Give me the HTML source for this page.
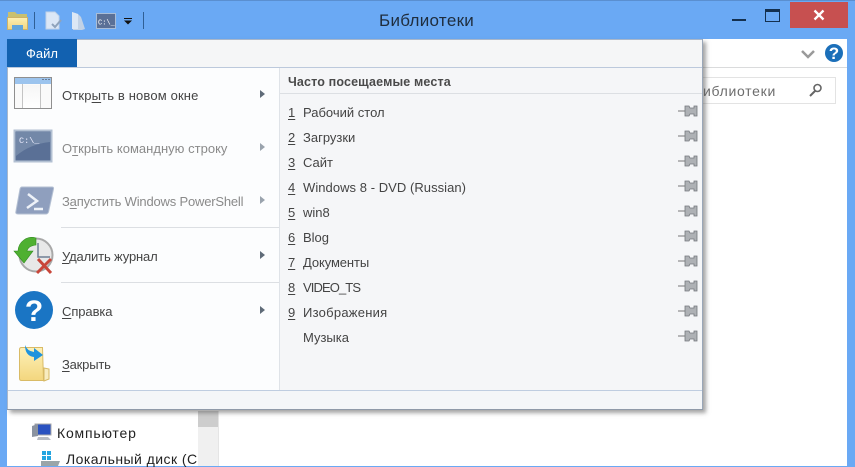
<!DOCTYPE html>
<html><head><meta charset="utf-8"><style>
html,body{margin:0;padding:0}
body{width:855px;height:466px;overflow:hidden;position:relative;background:#6aa9f4;font-family:"Liberation Sans","DejaVu Sans",sans-serif;font-size:13px;color:#444}
.a{position:absolute}
.t{position:absolute;white-space:nowrap;line-height:16px;letter-spacing:0}
.g{color:#8a8a8a}
u{text-underline-offset:2px}
.arr{position:absolute;left:260px;width:0;height:0;border-left:5px solid #5f6b78;border-top:4px solid transparent;border-bottom:4px solid transparent}
.n{left:288px}.r{left:303px}
</style></head><body>
<div class="a" style="left:0;top:0;width:855px;height:1px;background:#5a8fd0"></div>
<!-- quick access -->
<svg class="a" style="left:0;top:0" width="150" height="38">
<defs><linearGradient id="yf" x1="0" y1="0" x2="0" y2="1"><stop offset="0" stop-color="#fdf0b4"/><stop offset="1" stop-color="#f2d680"/></linearGradient></defs>
<path d="M8 12h7l2 2h10v6H8z" fill="#c8c070"/><path d="M7.500 17.500h20v12h-20z" fill="url(#yf)" stroke="#cdb268"/><path d="M12 25h11v5H12z" fill="#62a6dc"/>
<rect x="34" y="12" width="1" height="17" fill="#2f5f95"/>
<path d="M46 12h9l4 4v13H46z" fill="#dbe7f6" stroke="#c0d2e8"/><path d="M52 24l3 3 6-7" stroke="#8fa3bc" stroke-width="2" fill="none"/>
<path d="M72 12l6 2 3 3 4 12-3 1H73z" fill="#c2d2e6"/><path d="M72 12v17h6V14z" fill="#dce7f5"/>
<rect x="96.500" y="13.500" width="19" height="15" fill="#5a7096" stroke="#a9bdd6"/>
<text x="98" y="24.500" font-family="Liberation Mono" font-size="7" fill="#fff">C:\_</text>
<rect x="124" y="18" width="8" height="1" fill="#111"/><path d="M124 20.500h8l-4 4z" fill="#111"/>
<rect x="143" y="12" width="1" height="17" fill="#2f5f95"/>
</svg>
<div class="t" style="left:379px;top:10px;font-size:17px;line-height:22px;color:#1f2d3d;letter-spacing:.3px">Библиотеки</div>
<div class="a" style="left:732px;top:19px;width:14px;height:2px;background:#14304f"></div>
<div class="a" style="left:765px;top:9px;width:13px;height:9px;border:1px solid #14304f;border-top:3px solid #14304f"></div>
<div class="a" style="left:790px;top:2px;width:58px;height:26px;background:#c75050"></div>
<svg class="a" style="left:812px;top:9px" width="14" height="12"><path d="M2.500 1.500l9 9M11.500 1.500l-9 9" stroke="#fff" stroke-width="2.300"/></svg>
<!-- window -->
<div class="a" style="left:7px;top:39px;width:840px;height:427px;background:#fff"></div>
<div class="a" style="left:7px;top:67px;width:840px;height:1px;background:#dadbdc"></div>
<svg class="a" style="left:800px;top:48px" width="20" height="14"><path d="M2 3l6 6 6-6" stroke="#9a9a9a" stroke-width="2.500" fill="none"/></svg>
<div class="a" style="left:825px;top:44px;width:18px;height:18px;border-radius:50%;background:#1b6fb9;color:#fff;font:bold 17px/19px 'Liberation Sans';text-align:center">?</div>
<div class="a" style="left:640px;top:77px;width:194px;height:25px;border:1px solid #e3e3e3"></div>
<div class="t" style="left:703px;top:83px;color:#6d6d6d;font-size:14px;letter-spacing:.7px">иблиотеки</div>
<svg class="a" style="left:808px;top:82px" width="16" height="16"><circle cx="9.500" cy="6" r="3.500" fill="none" stroke="#666" stroke-width="1.600"/><path d="M7 9l-5 5" stroke="#666" stroke-width="2"/></svg>
<!-- nav -->
<div class="a" style="left:198px;top:411px;width:20px;height:55px;background:#f0f0f0"></div>
<div class="a" style="left:198px;top:411px;width:20px;height:16px;background:#cdcdcd"></div>
<div class="a" style="left:218px;top:411px;width:1px;height:55px;background:#e5e5e5"></div>
<svg class="a" style="left:30px;top:422px" width="24" height="20"><rect x="5" y="2" width="16" height="11" fill="#2a52c0" stroke="#aaa"/><path d="M8 15h10l3 3H7z" fill="#b8bcc4"/><path d="M2 4l6-2v12l-6 1z" fill="#8b93a0"/></svg>
<div class="t" style="left:57px;top:425px;font-size:14px;color:#222;letter-spacing:.8px">Компьютер</div>
<svg class="a" style="left:40px;top:450px" width="22" height="16"><rect x="2" y="1" width="4" height="4" fill="#24a5e0"/><rect x="7" y="1" width="4" height="4" fill="#24a5e0"/><rect x="2" y="6" width="4" height="4" fill="#24a5e0"/><rect x="7" y="6" width="4" height="4" fill="#24a5e0"/><path d="M1 11h19l-2 5H1z" fill="#9aa5a8"/></svg>
<div class="t" style="left:66px;top:451px;font-size:14px;color:#222;letter-spacing:.45px;width:131px;overflow:hidden">Локальный диск (С:)</div>
<!-- menu -->
<div class="a" style="left:7px;top:39px;width:696px;height:371px;background:#fcfdfe;box-shadow:3px 3px 4px rgba(90,90,90,.55)"></div>
<div class="a" style="left:7px;top:39px;width:696px;height:28px;background:#f5f6f7"></div>
<div class="a" style="left:7px;top:39px;width:696px;height:1px;background:#a9b7ca"></div>
<div class="a" style="left:7px;top:67px;width:696px;height:1px;background:#bcc9dc"></div>
<div class="a" style="left:7px;top:39px;width:1px;height:371px;background:#a9b7ca"></div>
<div class="a" style="left:702px;top:39px;width:1px;height:371px;background:#9aa7b8"></div>
<div class="a" style="left:7px;top:409px;width:696px;height:1px;background:#8f9aa8"></div>
<div class="a" style="left:7px;top:39px;width:70px;height:28px;background:#1261b0;color:#fff;font-size:13px;line-height:29px;text-align:center;letter-spacing:0">Файл</div>
<!-- right pane -->
<div class="a" style="left:280px;top:68px;width:422px;height:322px;background:#f5f6f8"></div>
<div class="a" style="left:279px;top:68px;width:1px;height:322px;background:#dfe3e8"></div>
<div class="a" style="left:280px;top:93px;width:422px;height:1px;background:#dcdfe3"></div>
<div class="a" style="left:8px;top:390px;width:694px;height:1px;background:#bfcde0"></div>
<div class="a" style="left:8px;top:391px;width:694px;height:18px;background:#f4f6f8"></div>
<div class="a" style="left:61px;top:227px;width:218px;height:1px;background:#dcdfe3"></div>
<div class="a" style="left:61px;top:282px;width:218px;height:1px;background:#dcdfe3"></div>
<div class="t" style="left:288px;top:74px;font-weight:bold;font-size:12.500px;color:#4a4a4a;letter-spacing:.15px">Часто посещаемые места</div>
<!-- left icons -->
<svg class="a" style="left:0;top:68px" width="62" height="322">
<defs><linearGradient id="yg" x1="0" y1="0" x2="0" y2="1"><stop offset="0" stop-color="#fdf1b8"/><stop offset="1" stop-color="#f3d67e"/></linearGradient>
<linearGradient id="wg" x1="0" y1="0" x2="0" y2="1"><stop offset="0" stop-color="#f6f6f6"/><stop offset="1" stop-color="#fff"/></linearGradient></defs>
<rect x="14.500" y="9.500" width="37" height="31" fill="#fafafa" stroke="#8f8f8f"/><rect x="15" y="10" width="36" height="6" fill="#9cc4ee"/>
<path d="M23 17h17v23H23z" fill="url(#wg)"/><path d="M22.500 16v24M40.500 16v24" stroke="#c4c4c4"/>
<path d="M42 11.500h8" stroke="#6a7f99" stroke-dasharray="2 1"/>
<rect x="14.500" y="62.500" width="37" height="31" fill="#5a7096" stroke="#b2c0d2" stroke-width="2"/>
<path d="M16 64h34v10Q30 76 16 88z" fill="#7388a8"/>
<text x="19" y="75" font-family="Liberation Mono" font-size="8.500" fill="#eef">C:\_</text>
<path d="M22 119h30q2 0 1.500 2l-5 23a3 3 0 0 1-3 2H18q-3 0-2-3l4-22q.5-2 2-2z" fill="#8f9fbe" stroke="#b4c0d3"/>
<path d="M28 126l9 7-10 7M34 141h9" stroke="#eef2f8" stroke-width="2.500" fill="none"/>
<circle cx="36" cy="187" r="16.500" fill="#e8e8e8" stroke="#a8a8a8" stroke-width="2"/>
<path d="M38 175v14h12" stroke="#6f7f94" stroke-width="1.500" fill="none"/>
<path d="M36 170a14 14 0 0 0-18 13h-4l10 12 9-12h-6q1-5 9-6z" fill="#4fb031" stroke="#2f8a1e" stroke-width=".6"/>
<path d="M38 191l13 14M51 191l-14 14" stroke="#c8463a" stroke-width="3"/>
<circle cx="34" cy="242" r="19" fill="#1a75c4"/>
<text x="34" y="253" text-anchor="middle" font-family="Liberation Sans" font-weight="bold" font-size="30" fill="#fff">?</text>
<path d="M21.500 279.500h21l1 33h-22q-2 0-2-2v-29q0-2 2-2z" fill="url(#yg)" stroke="#d9bb66"/>
<path d="M44 300l5 1v10l-5 2z" fill="#f8ecc0" stroke="#d6b964"/>
<path d="M25 277q2 6 9 7v-4l9 7-9 6v-4q-9-1-9-12z" fill="#1f93dd"/>
</svg>
<!-- left labels -->
<div class="t" style="left:62px;top:88px;letter-spacing:.15px">Отк<span>р<u>ы</u>ть в новом окне</span></div><div class="arr" style="top:90px"></div>
<div class="t g" style="left:62px;top:141px;letter-spacing:.02px">О<u>т</u>крыть командную строку</div><div class="arr" style="top:143px;border-left-color:#9aa3ad"></div>
<div class="t g" style="left:62px;top:194px;letter-spacing:-.19px">З<u>а</u>пустить Windows PowerShell</div><div class="arr" style="top:196px;border-left-color:#9aa3ad"></div>
<div class="t" style="left:62px;top:249px;letter-spacing:-.15px"><u>У</u>далить журнал</div><div class="arr" style="top:251px"></div>
<div class="t" style="left:62px;top:304px;letter-spacing:-.08px"><u>С</u>правка</div><div class="arr" style="top:306px"></div>
<div class="t" style="left:62px;top:357px;letter-spacing:-.2px"><u>З</u>акрыть</div>
<!-- list -->
<div class="t n" style="top:105px"><u>1</u></div><div class="t r" style="top:105px">Рабочий стол</div>
<div class="t n" style="top:130px"><u>2</u></div><div class="t r" style="top:130px">Загрузки</div>
<div class="t n" style="top:155px"><u>3</u></div><div class="t r" style="top:155px">Сайт</div>
<div class="t n" style="top:180px"><u>4</u></div><div class="t r" style="top:180px;letter-spacing:.05px">Windows 8 - DVD (Russian)</div>
<div class="t n" style="top:205px"><u>5</u></div><div class="t r" style="top:205px">win8</div>
<div class="t n" style="top:230px"><u>6</u></div><div class="t r" style="top:230px">Blog</div>
<div class="t n" style="top:255px"><u>7</u></div><div class="t r" style="top:255px;letter-spacing:-.1px">Документы</div>
<div class="t n" style="top:280px"><u>8</u></div><div class="t r" style="top:280px;letter-spacing:-.9px">VIDEO_TS</div>
<div class="t n" style="top:305px"><u>9</u></div><div class="t r" style="top:305px;letter-spacing:.25px">Изображения</div>
<div class="t r" style="top:330px">Музыка</div>
<!-- pins -->
<svg class="a" style="left:678px;top:100px" width="20" height="250">
<defs><g id="p"><path d="M0 11h7" stroke="#777"/><path d="M7 6h4l1 2h4V6h3v10h-3v-2h-4l-1 2H7z" fill="#aeb1b5" stroke="#74777c" stroke-width=".8"/></g></defs>
<use href="#p"/><use href="#p" y="25"/><use href="#p" y="50"/><use href="#p" y="75"/><use href="#p" y="100"/><use href="#p" y="125"/><use href="#p" y="150"/><use href="#p" y="175"/><use href="#p" y="200"/><use href="#p" y="225"/>
</svg>
</body></html>
